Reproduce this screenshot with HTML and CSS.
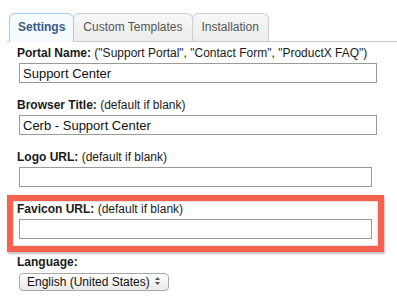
FILE: index.html
```html
<!DOCTYPE html>
<html lang="en">
    <head>
        <meta charset="UTF-8"/>
        <title>Portal Settings</title>
        <link rel="stylesheet" href="styles.css">
    </head>
<body>
    <div class="page">
        <ul class="tabs">
            <li class="tab active">Settings</li>
            <li class="tab">Custom Templates</li>
            <li class="tab">Installation</li>
        </ul>

        <form class="form">
            <div class="field">
                <label><b>Portal Name:</b> ("Support Portal", "Contact Form", "ProductX FAQ")</label>
                <input type="text" class="wide" value="Support Center">
            </div>

            <div class="field">
                <label><b>Browser Title:</b> (default if blank)</label>
                <input type="text" class="wide" value="Cerb - Support Center">
            </div>

            <div class="field">
                <label><b>Logo URL:</b> (default if blank)</label>
                <input type="text" value="">
            </div>

            <div class="highlight">
                <div class="field">
                    <label><b>Favicon URL:</b> (default if blank)</label>
                    <input type="text" value="">
                </div>
            </div>

            <div class="field">
                <label><b>Language:</b></label>
                <div class="select-wrap">
                    <select>
                        <option>English (United States)</option>
                    </select>
                    <svg class="arrows" width="7" height="10" viewBox="0 0 7 10">
                        <path d="M3.5 1 L6 4 L1 4 Z" fill="#555"/>
                        <path d="M3.5 9 L6 6 L1 6 Z" fill="#555"/>
                    </svg>
                </div>
            </div>
        </form>
    </div>
</body>
</html>
```

FILE: styles.css
```css
body{
    margin: 0;
    background: #fff;
    font-family: 'Liberation Sans', Arial, sans-serif;
    color: #1a1a1a;
}

.page{
    padding: 13px 0 0 7px;
}

.tabs{
    display: flex;
    list-style: none;
    margin: 0;
    padding: 0 0 0 2px;
    border-bottom: 1px solid #cbcbcb;
}

.tab{
    height: 27px;
    line-height: 27px;
    padding: 0 9px;
    font-size: 12px;
    color: #555;
    background: linear-gradient(#f7f7f7, #ececec);
    border: 1px solid #cfcfcf;
    border-bottom: none;
    border-radius: 6px 6px 0 0;
    margin-right: -1px;
}

.tab.active{
    position: relative;
    height: 28px;
    padding: 0 8px;
    margin-bottom: -1px;
    font-weight: bold;
    color: #3b5a86;
    background: #f5faff;
    border-color: #a9cbe8;
    z-index: 1;
}

.form{
    padding: 4px 0 0 10px;
}

.field{
    margin-bottom: 15px;
}

.field label{
    display: block;
    font-size: 12px;
    line-height: 14px;
    margin-bottom: 3px;
    white-space: nowrap;
}

.field input{
    display: block;
    box-sizing: border-box;
    width: 353px;
    height: 20px;
    margin: 0 0 0 2px;
    padding: 0 3px;
    border: 1px solid #9a9a9a;
    font-family: 'Liberation Sans', Arial, sans-serif;
    font-size: 13px;
    color: #111;
}

.field input.wide{
    width: 358px;
}

.highlight{
    box-sizing: border-box;
    width: 377px;
    margin: -7px 0 3px -10px;
    padding: 1px 0 7px 4px;
    border: 6px solid #f6624f;
    box-shadow: inset 0 0 0 1px #e4e4e4, 1px 2px 2px rgba(0,0,0,0.25);
}

.highlight .field{
    margin-bottom: 0;
}

.select-wrap{
    position: relative;
    width: 150px;
    margin-left: 2px;
}

.select-wrap select{
    -webkit-appearance: none;
    appearance: none;
    box-sizing: border-box;
    width: 150px;
    height: 18px;
    padding: 0 0 0 7px;
    border: 1px solid #a8a8a8;
    border-radius: 4px;
    background: linear-gradient(#ffffff, #e9e9e9);
    font-family: 'Liberation Sans', Arial, sans-serif;
    font-size: 12px;
    color: #111;
}

.arrows{
    position: absolute;
    right: 8px;
    top: 4px;
    pointer-events: none;
}
```
